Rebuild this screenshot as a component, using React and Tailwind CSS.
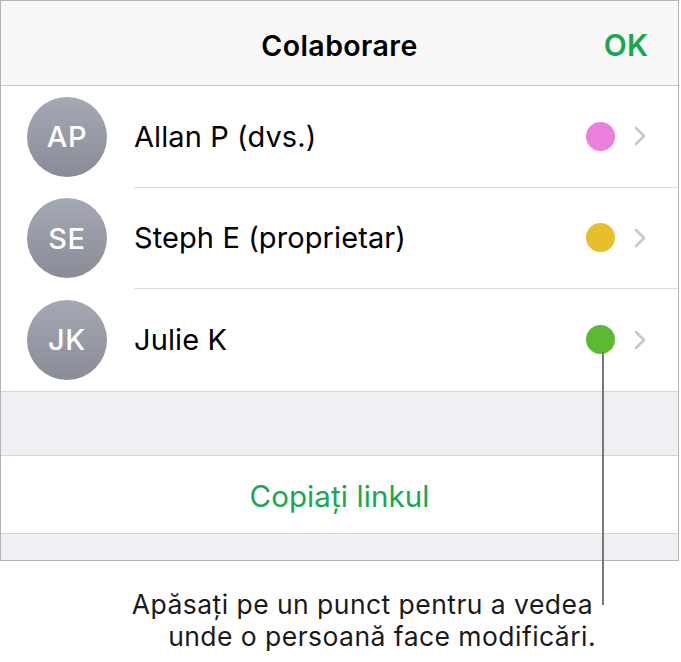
import React from "react";

const people = [
  { initials: "AP", name: "Allan P (dvs.)", dot: "bg-[#ec7fdc]" },
  { initials: "SE", name: "Steph E (proprietar)", dot: "bg-[#e7bf2a]" },
  { initials: "JK", name: "Julie K", dot: "bg-[#5bba31]" },
];

function Chevron() {
  return (
    <svg width="12" height="20" viewBox="0 0 12 20" className="shrink-0">
      <path d="M2 2 L10 10 L2 18" fill="none" stroke="#c7c7cc" strokeWidth="2.6" strokeLinecap="round" strokeLinejoin="round" />
    </svg>
  );
}

export default function App() {
  return (
    <div className="relative w-[681px] h-[662px] bg-white font-['Inter','Roboto',sans-serif] text-black">
      <div className="w-[679px] border border-[#b4b4b8] flex flex-col">
        <div className="h-[85px] bg-[#f8f8f9] border-b border-[#c8c8cc] relative flex items-center justify-center">
          <span className="text-[28.5px] font-semibold tracking-[0.4px] pt-[6px]">Colaborare</span>
          <span className="absolute right-[30px] top-[24px] text-[30px] leading-[40px] font-semibold text-[#17a84f]">OK</span>
        </div>
        {people.map((p, i) => (
          <div key={p.initials} className="h-[101.5px] flex items-center">
            <div className="w-[80px] h-[80px] ml-[26px] rounded-full bg-gradient-to-b from-[#a5a9b4] to-[#898c96] flex items-center justify-center shrink-0">
              <span className="text-white text-[29px] font-medium tracking-[0.6px]">{p.initials}</span>
            </div>
            <div className={`ml-[27px] self-stretch flex-1 flex items-center pr-[32px] ${i < 2 ? "border-b border-[#dcdce0]" : ""}`}>
              <span className="flex-1 text-[29px] tracking-[0.1px]">{p.name}</span>
              <div className={`w-[29px] h-[29px] rounded-full ${p.dot}`} />
              <div className="ml-[19px]">
                <Chevron />
              </div>
            </div>
          </div>
        ))}
        <div className="h-[65px] bg-[#efeff4] border-t border-b border-[#d6d6da]" />
        <div className="h-[77px] flex items-center justify-center">
          <span className="text-[29.5px] text-[#17a84f] tracking-[0.1px] pt-[4px]">Copiați linkul</span>
        </div>
        <div className="h-[27px] bg-[#efeff4] border-t border-[#d6d6da]" />
      </div>
      <div className="absolute left-[602px] top-[352px] w-[2px] h-[253px] bg-[#777]" />
      <div className="absolute right-[85px] top-[588px] text-right text-[26.5px] leading-[32px] text-[#1a1a1a] tracking-[0.45px]">
        <div className="pr-[3px]">Apăsați pe un punct pentru a vedea</div>
        <div>unde o persoană face modificări.</div>
      </div>
    </div>
  );
}
